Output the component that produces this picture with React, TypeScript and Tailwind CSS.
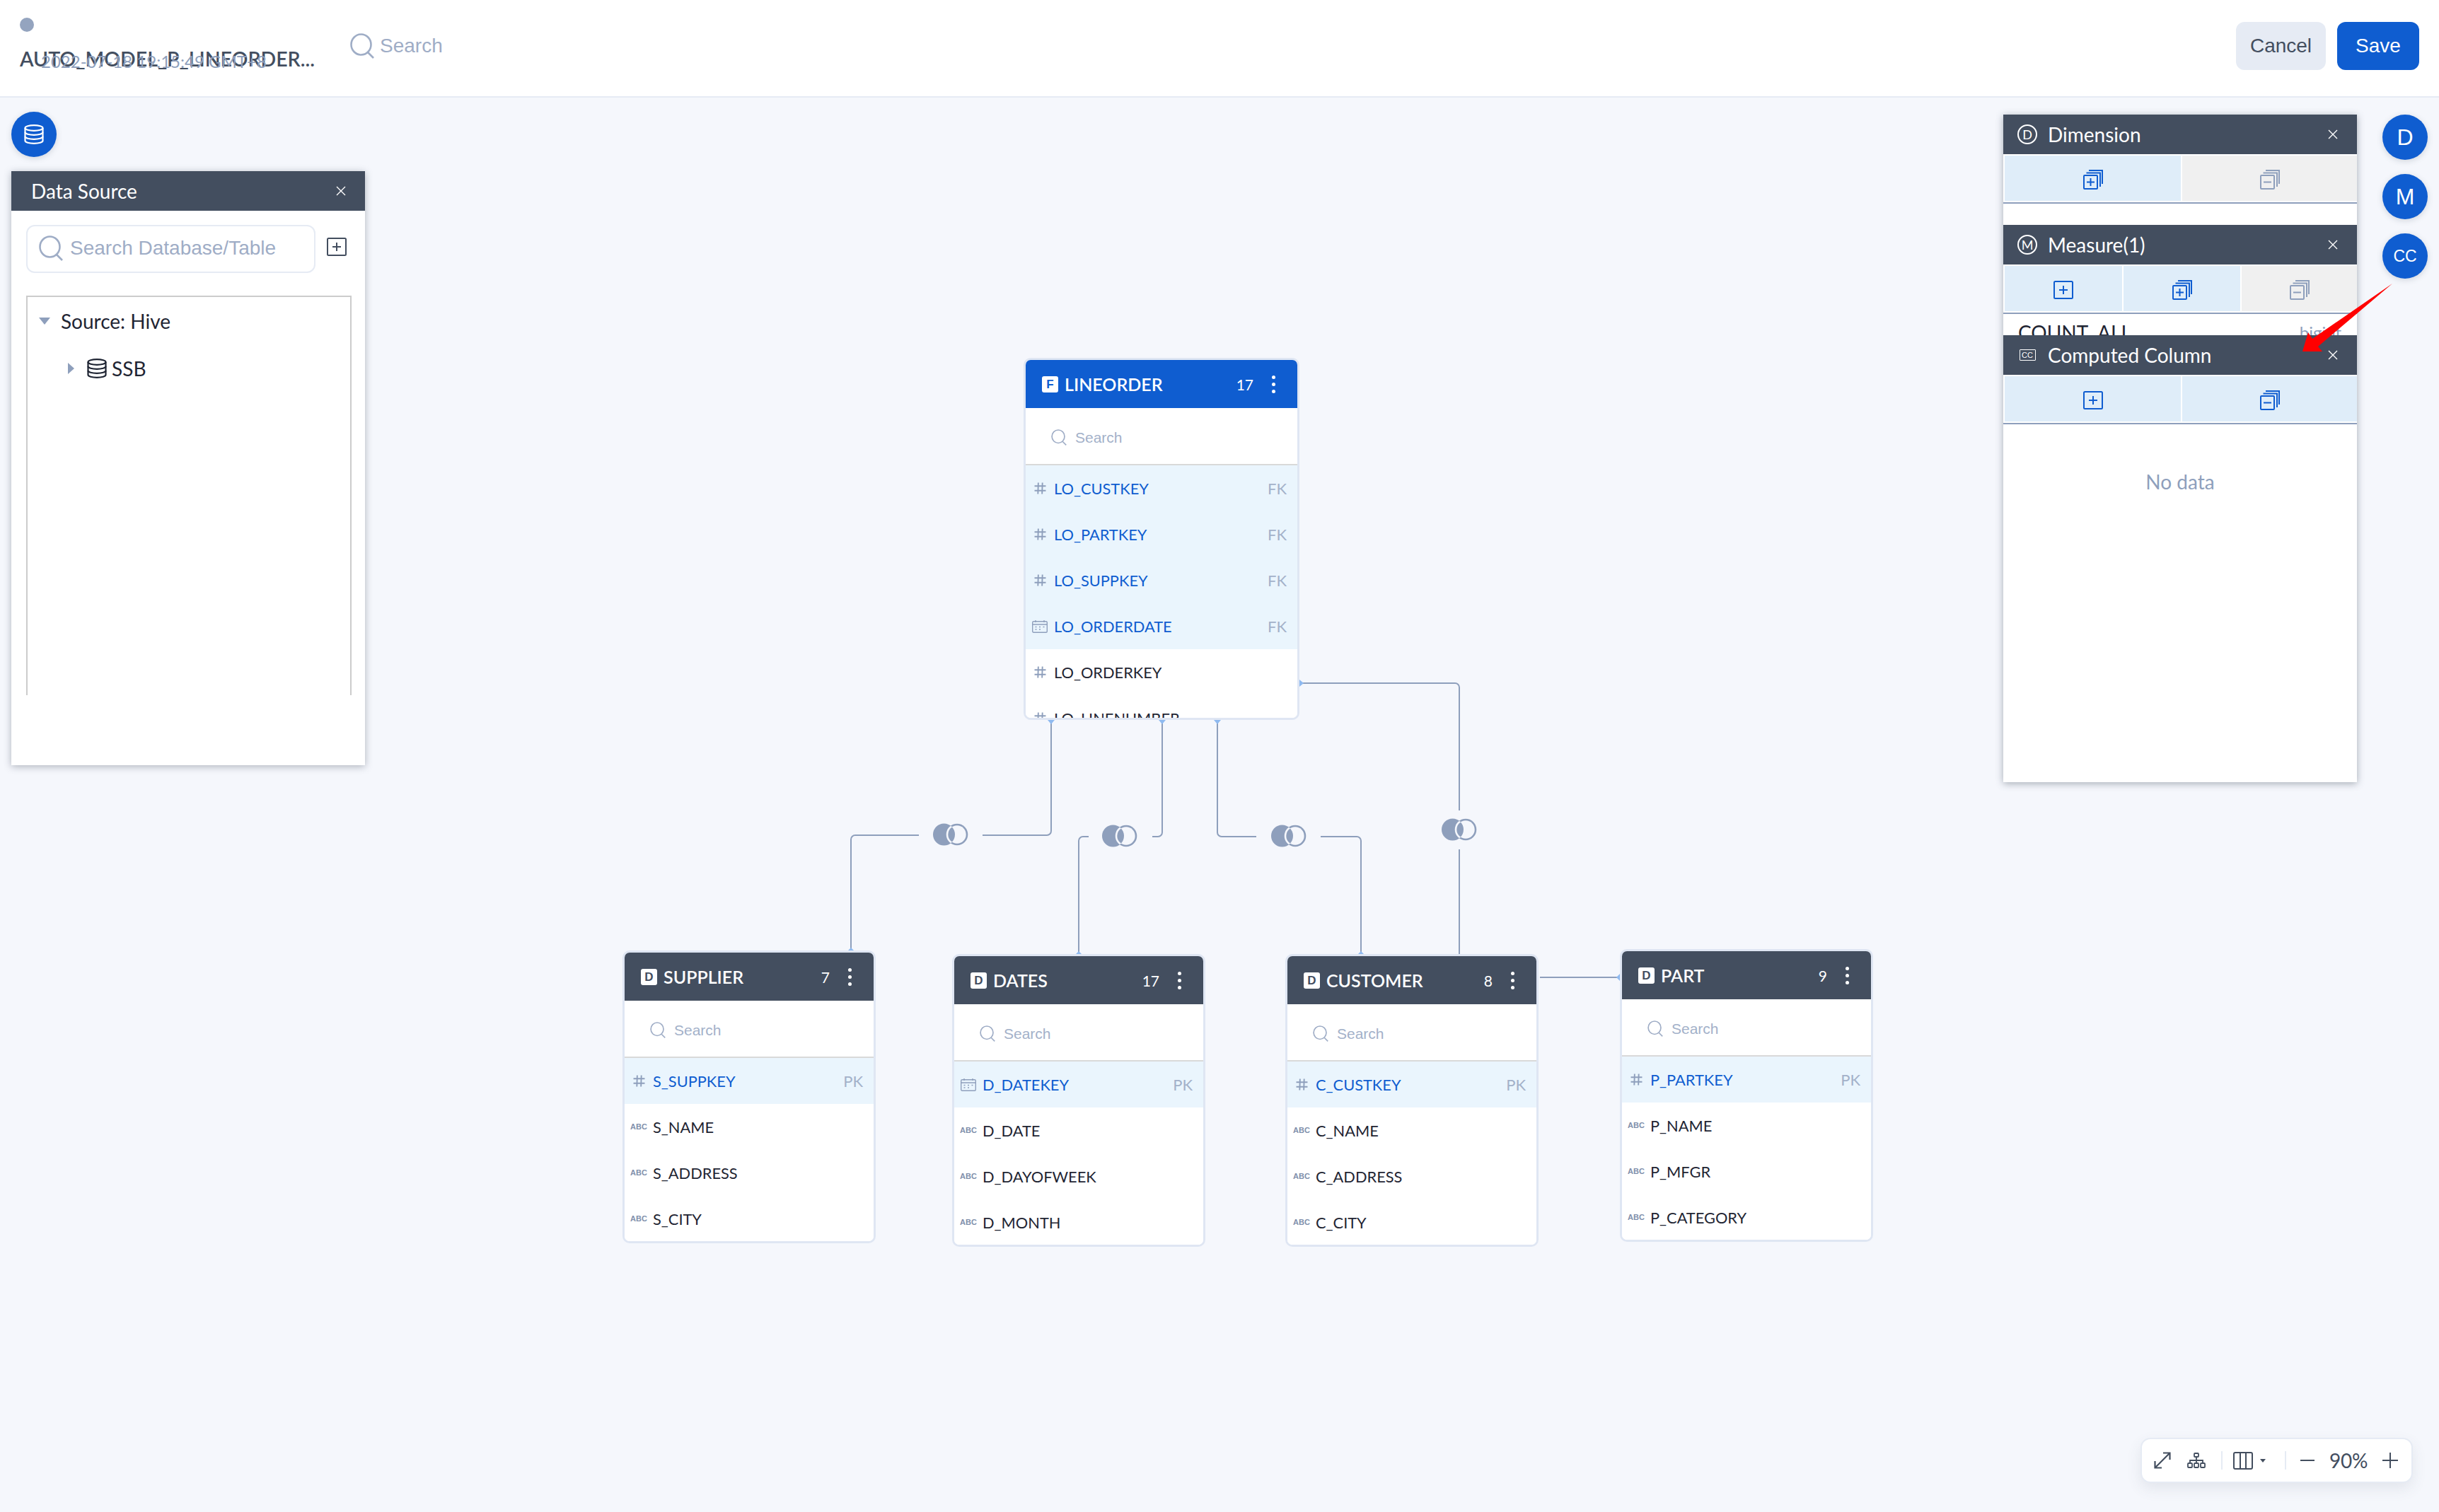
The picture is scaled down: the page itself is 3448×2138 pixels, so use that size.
import React from 'react';

const SearchIcon = ({ className }: { className: string }) => (
  <svg viewBox="0 0 34 36" fill="none" stroke="currentColor" strokeWidth="2.6" className={className}>
    <ellipse cx="15.5" cy="16" rx="14" ry="14.5" />
    <path d="M25 27l8 8" />
  </svg>
);

const DbIcon = ({ className }: { className: string }) => (
  <svg viewBox="0 0 28 28" fill="none" stroke="currentColor" strokeWidth="2.2" className={className}>
    <ellipse cx="14" cy="5" rx="12.5" ry="3.8" />
    <path d="M1.5 5v18c0 2.1 5.6 3.8 12.5 3.8s12.500-1.700 12.500-3.800V5" />
    <path d="M1.500 11c0 2.100 5.600 3.800 12.500 3.800s12.500-1.700 12.500-3.800" />
    <path d="M1.500 17c0 2.100 5.600 3.800 12.500 3.800s12.500-1.700 12.500-3.800" />
  </svg>
);

const CloseIcon = () => (
  <svg viewBox="0 0 14 14" fill="none" stroke="currentColor" strokeWidth="1.4" className="w-[14px] h-[14px] text-white">
    <path d="M1 1l12 12M13 1L1 13" />
  </svg>
);

const PlusBox = ({ className }: { className: string }) => (
  <svg viewBox="0 0 28 26" fill="none" stroke="currentColor" strokeWidth="2" className={className}>
    <rect x="1" y="1" width="26" height="24" rx="1.500" />
    <path d="M8 13h12M14 7v12" />
  </svg>
);

const StackIcon = ({ minus, className }: { minus?: boolean; className: string }) => (
  <svg viewBox="0 0 28 28" fill="none" stroke="currentColor" strokeWidth="2" className={className}>
    <rect x="1" y="8" width="19" height="19" rx="1" />
    <path d="M4.500 4.500H24V24" />
    <path d="M8 1h19v19" />
    {minus ? <path d="M5 17.500h11" /> : <path d="M5 17.500h11M10.500 12v11" />}
  </svg>
);

const HashIcon = () => (
  <svg viewBox="0 0 16 16" fill="none" stroke="currentColor" strokeWidth="1.800" className="w-[17px] h-[17px] text-[#8e9fbc]">
    <path d="M0.500 5h15M0.500 11h15M5.500 0.500l-0.500 15M11 0.500l-0.500 15" />
  </svg>
);

const CalendarIcon = () => (
  <svg viewBox="0 0 22 18" fill="none" stroke="currentColor" strokeWidth="1.400" className="w-[22px] h-[18px] text-[#8e9fbc]">
    <rect x="0.700" y="1.700" width="20.600" height="15.600" rx="1.500" />
    <path d="M0.700 6h20.600M5 0v3M17 0v3" />
    <path d="M4.500 9.500h2M10 9.500h2M15.500 9.500h2M4.500 13h2M10 13h2" />
  </svg>
);

// left circle solid, right one a ring, the overlap drawn as a lens
const JoinIcon = ({ className }: { className: string }) => (
  <svg viewBox="0 0 50 32" className={className}>
    <defs>
      <clipPath id="join-left">
        <circle cx="15.500" cy="16" r="15.500" />
      </clipPath>
    </defs>
    <circle cx="15.500" cy="16" r="15.500" fill="#8e9fbc" />
    <circle cx="34" cy="16" r="15.300" fill="#8e9fbc" />
    <circle cx="34" cy="16" r="12.700" fill="#f5f7fc" />
    <circle cx="34" cy="16" r="15.300" fill="#f5f7fc" clipPath="url(#join-left)" />
    <circle cx="34" cy="16" r="12.700" fill="#8e9fbc" clipPath="url(#join-left)" />
  </svg>
);

type Field = { type: 'num' | 'date' | 'abc'; name: string; key?: string };

const TableNode = ({
  pos, title, count, letter, head, fields,
}: { pos: string; title: string; count: number; letter: string; head: string; fields: Field[] }) => (
  <div className={`absolute ${pos} border-[3px] border-[#dfe6f3] rounded-[10px] bg-white overflow-hidden`}>
    <div className={`${head} h-[68px] flex items-center pl-[23px] pr-[30px] text-white`}>
      <span className="w-[23px] h-[23px] bg-white rounded-[3px] flex items-center justify-center mr-[9px]">
        <span className={`text-[17px] font-bold leading-none font-['Liberation_Sans',sans-serif] ${head === 'bg-[#0f5dd0]' ? 'text-[#0f5dd0]' : 'text-[#434e5f]'}`}>{letter}</span>
      </span>
      <span className="text-[25px] font-semibold flex-1 leading-none">{title}</span>
      <span className="text-[21px] leading-none">{count}</span>
      <span className="ml-[24px] w-[8px] flex flex-col items-center gap-[5px]">
        <i className="w-[5px] h-[5px] rounded-full bg-white" />
        <i className="w-[5px] h-[5px] rounded-full bg-white" />
        <i className="w-[5px] h-[5px] rounded-full bg-white" />
      </span>
    </div>
    <div className="h-[81px] pt-[3px] border-b-2 border-[#d9d9d9] flex items-center pl-[36px] text-[#a3b1c9]">
      <SearchIcon className="w-[22px] h-[23px] text-[#9fadc6]" />
      <span className="ml-[12px] text-[21px] leading-none font-['Liberation_Sans',sans-serif]">Search</span>
    </div>
    {fields.map((f) => (
      <div key={f.name} className={`h-[65px] flex items-center pr-[15px] ${f.key ? 'bg-[#eaf5fd]' : 'bg-white'}`}>
        <span className="w-[40px] flex justify-center">
          {f.type === 'num' && <HashIcon />}
          {f.type === 'date' && <CalendarIcon />}
          {f.type === 'abc' && <span className="text-[11px] font-bold text-[#7f8fab] font-['Liberation_Sans',sans-serif]">ABC</span>}
        </span>
        <span className={`flex-1 text-[21.800px] leading-none whitespace-nowrap ${f.key ? 'text-[#0f5dd0]' : 'text-[#1f2533]'}`}>{f.name}</span>
        {f.key && <span className="text-[22px] leading-none text-[#a3b1c9]">{f.key}</span>}
      </div>
    ))}
  </div>
);

const PanelHead = ({ icon, title }: { icon: React.ReactNode; title: string }) => (
  <div className="h-[56px] shrink-0 bg-[#434e5f] flex items-center pl-[20px] pr-[27px] text-white">
    <span className="w-[28px] flex justify-center">{icon}</span>
    <span className="ml-[15px] flex-1 text-[28px] leading-none">{title}</span>
    <CloseIcon />
  </div>
);

const CircleLetter = ({ letter }: { letter: string }) => (
  <span className="w-[28px] h-[28px] rounded-full border-2 border-white flex items-center justify-center text-[18px] leading-none">{letter}</span>
);

const Tab = ({ on, children, width }: { on?: boolean; children: React.ReactNode; width: string }) => (
  <div className={`${width} h-full pt-[3px] flex items-center justify-center ${on ? 'bg-[#dfedf9]' : 'bg-[#f0f0f0]'}`}>{children}</div>
);

const TabRow = ({ children }: { children: React.ReactNode }) => (
  <div className="shrink-0 h-[70px] pt-[2px] pb-[2px] pl-[2px] flex gap-[2px] border-b-2 border-[#8e9fbc]">{children}</div>
);

const blue = 'w-[28px] h-[28px] text-[#0f5dd0]';
const gray = 'w-[28px] h-[28px] text-[#8e9fbc]';

const Fab = ({ children, className }: { children: React.ReactNode; className: string }) => (
  <div className={`w-[64px] h-[64px] rounded-full bg-[#0f5dd0] text-white flex items-center justify-center shadow-[0_2px_8px_rgba(67,78,95,0.2)] font-['Liberation_Sans',sans-serif] ${className}`}>
    {children}
  </div>
);

const lineorder: Field[] = [
  { type: 'num', name: 'LO_CUSTKEY', key: 'FK' },
  { type: 'num', name: 'LO_PARTKEY', key: 'FK' },
  { type: 'num', name: 'LO_SUPPKEY', key: 'FK' },
  { type: 'date', name: 'LO_ORDERDATE', key: 'FK' },
  { type: 'num', name: 'LO_ORDERKEY' },
  { type: 'num', name: 'LO_LINENUMBER' },
];

const dim = (first: Field, a: string, b: string, c: string): Field[] => [
  first,
  { type: 'abc', name: a },
  { type: 'abc', name: b },
  { type: 'abc', name: c },
];

const App: React.FC = () => {
  return (
    <div className="relative w-[3448px] h-[2138px] overflow-hidden bg-[#f5f7fc] font-['Lato',sans-serif]">
      {/* Top bar */}
      <div className="relative h-[138px] bg-white border-b-2 border-[#e6ebf4] flex items-center pb-[6px] pl-[28px] pr-[28px]">
        <div className="relative w-[467px] self-start pt-[25px]">
          <div className="w-[20px] h-[20px] rounded-full bg-[#94a4bf]" />
          <div className="mt-[20px] text-[28.500px] leading-[36px] font-semibold text-[#434e5f] whitespace-nowrap">AUTO_MODEL_P_LINEORDER...</div>
          <div className="absolute left-[30px] top-[71px] text-[24px] leading-[32px] text-[#8e9fbc] whitespace-nowrap">2022-07-18 19:15:49 GMT+8</div>
        </div>
        <SearchIcon className="w-[34px] h-[36px] text-[#9fadc6]" />
        <span className="ml-[8px] text-[28px] leading-none text-[#9fadc6] font-['Liberation_Sans',sans-serif]">Search</span>
        <div className="ml-auto flex gap-[16px] font-['Liberation_Sans',sans-serif] text-[28px]">
          <button className="w-[127px] h-[68px] rounded-[12px] bg-[#e6ebf4] text-[#434e5f]">Cancel</button>
          <button className="w-[116px] h-[68px] rounded-[12px] bg-[#0f5dd0] text-white">Save</button>
        </div>
      </div>

      {/* Links between tables */}
      <svg className="absolute inset-0 w-[3448px] h-[2138px]" fill="none" stroke="#8e9fbc" strokeWidth="2">
        <path d="M1486 1018V1175a6 6 0 0 1-6 6H1389" />
        <path d="M1299 1181H1209a6 6 0 0 0-6 6V1344" />
        <path d="M1643 1018V1177a6 6 0 0 1-6 6H1629" />
        <path d="M1539 1183H1531a6 6 0 0 0-6 6V1349" />
        <path d="M1721 1018V1177a6 6 0 0 0 6 6H1776" />
        <path d="M1867 1183H1918a6 6 0 0 1 6 6V1349" />
        <path d="M1837 966H2057a6 6 0 0 1 6 6V1146" />
        <path d="M2063 1201V1349" />
        <path d="M2177 1382H2289" />
        <g fill="#8fbaf0" stroke="none">
          <path d="M1481 1018h10l-5 6z" />
          <path d="M1638 1018h10l-5 6z" />
          <path d="M1716 1018h10l-5 6z" />
          <path d="M1837 961v10l6-5z" />
          <path d="M1199 1344h8l-4-4z" />
          <path d="M1521 1349h8l-4-4z" />
          <path d="M1920 1349h8l-4-4z" />
          <path d="M2290 1377v10l-5-5z" />
        </g>
      </svg>
      <JoinIcon className="absolute left-[1319px] top-[1164px] w-[50px] h-[32px]" />
      <JoinIcon className="absolute left-[1558px] top-[1166px] w-[50px] h-[32px]" />
      <JoinIcon className="absolute left-[1797px] top-[1166px] w-[50px] h-[32px]" />
      <JoinIcon className="absolute left-[2038px] top-[1157px] w-[50px] h-[32px]" />

      {/* Tables */}
      <TableNode pos="left-[1447px] top-[506px] w-[390px] h-[512px]" title="LINEORDER" count={17} letter="F" head="bg-[#0f5dd0]" fields={lineorder} />
      <TableNode pos="left-[880px] top-[1344px] w-[358px] h-[414px]" title="SUPPLIER" count={7} letter="D" head="bg-[#434e5f]"
        fields={dim({ type: 'num', name: 'S_SUPPKEY', key: 'PK' }, 'S_NAME', 'S_ADDRESS', 'S_CITY')} />
      <TableNode pos="left-[1346px] top-[1349px] w-[358px] h-[414px]" title="DATES" count={17} letter="D" head="bg-[#434e5f]"
        fields={dim({ type: 'date', name: 'D_DATEKEY', key: 'PK' }, 'D_DATE', 'D_DAYOFWEEK', 'D_MONTH')} />
      <TableNode pos="left-[1817px] top-[1349px] w-[358px] h-[414px]" title="CUSTOMER" count={8} letter="D" head="bg-[#434e5f]"
        fields={dim({ type: 'num', name: 'C_CUSTKEY', key: 'PK' }, 'C_NAME', 'C_ADDRESS', 'C_CITY')} />
      <TableNode pos="left-[2290px] top-[1342px] w-[358px] h-[414px]" title="PART" count={9} letter="D" head="bg-[#434e5f]"
        fields={dim({ type: 'num', name: 'P_PARTKEY', key: 'PK' }, 'P_NAME', 'P_MFGR', 'P_CATEGORY')} />

      {/* Data source window */}
      <Fab className="absolute left-[16px] top-[158px]">
        <DbIcon className="w-[28px] h-[28px]" />
      </Fab>
      <div className="absolute left-[16px] top-[242px] w-[500px] h-[840px] bg-white shadow-[0_2px_10px_rgba(67,78,95,0.4)]">
        <div className="h-[56px] bg-[#434e5f] flex items-center pl-[28px] pr-[27px] text-white">
          <span className="flex-1 text-[28px] leading-none">Data Source</span>
          <CloseIcon />
        </div>
        <div className="pt-[20px] pl-[21px] pr-[26px] flex items-start">
          <div className="w-[409px] h-[68px] rounded-[12px] border-2 border-[#e6ebf4] flex items-center pl-[16px] pb-[2px]">
            <SearchIcon className="w-[34px] h-[36px] text-[#9fadc6]" />
            <span className="ml-[10px] text-[28px] leading-none text-[#9fadc6] font-['Liberation_Sans',sans-serif] whitespace-nowrap">Search Database/Table</span>
          </div>
          <PlusBox className="ml-auto mt-[17px] w-[28px] h-[28px] text-[#434e5f]" />
        </div>
        <div className="mt-[32px] ml-[21px] w-[460px] h-[565px] border-2 border-b-0 border-[#cccccc] text-[#1f2533]">
          <div className="h-[64px] mt-[2px] flex items-center pl-[16px]">
            <span className="w-0 h-0 border-x-[8px] border-x-transparent border-t-[10px] border-t-[#8e9fbc]" />
            <span className="ml-[15px] text-[28px] leading-none">Source: Hive</span>
          </div>
          <div className="h-[70px] flex items-center pl-[57px]">
            <span className="w-0 h-0 border-y-[8px] border-y-transparent border-l-[9px] border-l-[#8e9fbc]" />
            <DbIcon className="ml-[18px] w-[28px] h-[28px] text-[#1f2533]" />
            <span className="ml-[7px] text-[28px] leading-none">SSB</span>
          </div>
        </div>
      </div>

      {/* Model panels */}
      <div className="absolute left-[2832px] top-[162px] w-[500px] h-[944px] flex flex-col bg-white shadow-[0_2px_10px_rgba(67,78,95,0.45)]">
        <div className="h-[156px] shrink-0 overflow-hidden">
          <PanelHead icon={<CircleLetter letter="D" />} title="Dimension" />
          <TabRow>
            <Tab on width="w-[249px]"><StackIcon className={blue} /></Tab>
            <Tab width="w-[247px]"><StackIcon minus className={gray} /></Tab>
          </TabRow>
        </div>
        <div className="h-[156px] shrink-0 overflow-hidden">
          <PanelHead icon={<CircleLetter letter="M" />} title="Measure(1)" />
          <TabRow>
            <Tab on width="w-[166px]"><PlusBox className={blue} /></Tab>
            <Tab on width="w-[165px]"><StackIcon className={blue} /></Tab>
            <Tab width="w-[163px]"><StackIcon minus className={gray} /></Tab>
          </TabRow>
          <div className="flex items-center h-[52px] pl-[21px] pr-[22px] text-[28px]">
            <span className="flex-1 text-[#1f2533]">COUNT_ALL</span>
            <span className="text-[24px] text-[#8e9fbc]">bigint</span>
          </div>
        </div>
        <div className="flex-1 flex flex-col">
          <PanelHead
            icon={
              <span className="w-[23px] h-[16px] border border-white rounded-[1px] flex items-center justify-center text-[11px] leading-none font-['Liberation_Sans',sans-serif]">CC</span>
            }
            title="Computed Column"
          />
          <TabRow>
            <Tab on width="w-[249px]"><PlusBox className={blue} /></Tab>
            <Tab on width="w-[247px]"><StackIcon minus className={blue} /></Tab>
          </TabRow>
          <div className="h-[162px] flex items-center justify-center text-[28px] leading-none text-[#8e9fbc]">No data</div>
        </div>
      </div>

      <div className="absolute left-[3368px] top-[162px] flex flex-col gap-[20px]">
        <Fab className="text-[32px]">D</Fab>
        <Fab className="text-[32px]">M</Fab>
        <Fab className="text-[23px]">CC</Fab>
      </div>

      {/* Red annotation arrow */}
      <svg className="absolute inset-0 w-[3448px] h-[2138px] pointer-events-none">
        <polygon points="3382,401 3269,479 3263,470 3255,497 3283,497 3277,490" fill="#ff0000" />
      </svg>

      {/* Zoom toolbar */}
      <div className="absolute left-[3026px] top-[2033px] w-[385px] h-[64px] bg-white rounded-[14px] border-2 border-[#e6ebf4] shadow-[0_8px_20px_rgba(67,78,95,0.1)] flex items-center pl-[17px] text-[#434e5f]">
        <svg viewBox="0 0 24 24" fill="none" stroke="currentColor" strokeWidth="2.200" className="w-[24px] h-[24px]">
          <path d="M1.500 22.500L22.500 1.500M13 1.500h9.500V11M1.500 13v9.500H11" />
        </svg>
        <svg viewBox="0 0 26 22" fill="none" stroke="currentColor" strokeWidth="1.800" className="ml-[23px] w-[26px] h-[22px]">
          <rect x="10" y="1" width="6" height="5" rx="1" />
          <rect x="1" y="15" width="6" height="6" rx="1" />
          <rect x="10" y="15" width="6" height="6" rx="1" />
          <rect x="19" y="15" width="6" height="6" rx="1" />
          <path d="M13 6v9M4 15v-4h18v4" />
        </svg>
        <i className="ml-[22px] w-[2px] h-[26px] bg-[#e6ebf4]" />
        <svg viewBox="0 0 28 25" fill="none" stroke="currentColor" strokeWidth="2" className="ml-[15px] w-[28px] h-[25px]">
          <rect x="1" y="1" width="26" height="23" rx="2" />
          <path d="M10 1v23M18 1v23" />
        </svg>
        <span className="ml-[10px] w-0 h-0 border-x-[4px] border-x-transparent border-t-[5px] border-t-[#434e5f]" />
        <i className="ml-[27px] w-[2px] h-[26px] bg-[#e6ebf4]" />
        <span className="ml-[20px] w-[20px] h-[2px] bg-[#434e5f]" />
        <span className="ml-[21px] w-[54px] text-[28px] leading-none text-center tracking-[-0.3px]">90%</span>
        <svg viewBox="0 0 24 24" fill="none" stroke="currentColor" strokeWidth="2" className="ml-[20px] w-[24px] h-[24px]">
          <path d="M1 12h22M12 1v22" />
        </svg>
      </div>
    </div>
  );
};

export default App;
